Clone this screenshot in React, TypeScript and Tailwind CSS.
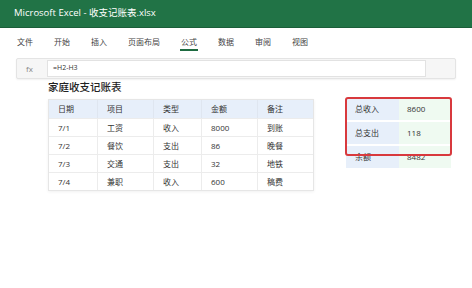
// Excel-like ledger window
const TABS = ['文件', '开始', '插入', '页面布局', '公式', '数据', '审阅', '视图'];

const COLS = [
  { key: 'date', label: '日期', w: 'w-[49px]' },
  { key: 'item', label: '项目', w: 'w-[56px]' },
  { key: 'type', label: '类型', w: 'w-[48px]' },
  { key: 'amount', label: '金额', w: 'w-[56px]' },
  { key: 'note', label: '备注', w: 'w-[55px]' },
] as const;

const ROWS = [
  { date: '7/1', item: '工资', type: '收入', amount: '8000', note: '到账' },
  { date: '7/2', item: '餐饮', type: '支出', amount: '86', note: '晚餐' },
  { date: '7/3', item: '交通', type: '支出', amount: '32', note: '地铁' },
  { date: '7/4', item: '兼职', type: '收入', amount: '600', note: '稿费' },
];

const SUMMARY = [
  { label: '总收入', value: '8600' },
  { label: '总支出', value: '118' },
  { label: '余额', value: '8482' },
];

export default function App() {
  return (
    <div
      className="w-[472px] h-[288px] bg-white overflow-hidden text-[#333]"
      style={{ fontFamily: '"Open Sans", "Noto Sans CJK SC", sans-serif' }}
    >
      {/* Title bar */}
      <div className="h-[28px] bg-[#217346] border-b border-[#1b5e39] flex items-center pl-[14px] text-white text-[9.5px]">
        Microsoft Excel - 收支记账表.xlsx
      </div>

      {/* Ribbon tabs */}
      <div className="h-[30px] flex gap-[21px] pl-[17px] pt-[8px]">
        {TABS.map((t) => (
          <div key={t} className="flex flex-col items-stretch">
            <span className="text-[8px] leading-[11px] text-[#444]">{t}</span>
            {t === '公式' && <span className="mt-[2px] h-[2px] bg-[#1e6b41] -mx-[1px]" />}
          </div>
        ))}
      </div>

      {/* Formula bar */}
      <div className="mx-[16px] h-[21px] flex items-center bg-[#f6f6f6] border border-[#e4e4e4] rounded-[2px] shadow-[0_1px_2px_rgba(0,0,0,0.06)]">
        <span className="w-[30px] pl-[9px] text-[8px] text-[#888]">fx</span>
        <div className="flex-1 h-[17px] bg-white border border-[#e2e2e2] flex items-center pl-[5px] text-[7px] text-[#333]">
          =H2-H3
        </div>
        <div className="w-[29px]" />
      </div>

      {/* Sheet title */}
      <div className="pl-[48px] mt-[1px] text-[10.5px] leading-[15px] font-medium text-[#222]">家庭收支记账表</div>

      <div className="flex items-start pl-[48px]">
        {/* Ledger table */}
        <div className="mt-[4px] border border-[#e6e6e6] shadow-[0_1px_3px_rgba(0,0,0,0.06)] text-[8px]">
          <div className="flex h-[18px] bg-[#e7effa]">
            {COLS.map((c) => (
              <div key={c.key} className={`${c.w} flex items-center pl-[9px] border-r border-[#dfe6f0] last:border-r-0`}>
                {c.label}
              </div>
            ))}
          </div>
          {ROWS.map((r) => (
            <div key={r.date} className="flex h-[18px] border-t border-[#ececec]">
              {COLS.map((c) => (
                <div key={c.key} className={`${c.w} flex items-center pl-[9px] border-r border-[#ececec] last:border-r-0`}>
                  {r[c.key]}
                </div>
              ))}
            </div>
          ))}
        </div>

        {/* Summary */}
        <div className="relative ml-[32px] mt-[3px] flex flex-col gap-[2px] text-[8px]">
          {SUMMARY.map((s) => (
            <div key={s.label} className="flex h-[22px]">
              <div className="w-[53px] bg-[#e7effa] flex items-center pl-[9px]">{s.label}</div>
              <div className="w-[52px] bg-[#effaf1] flex items-center pl-[8px]">{s.value}</div>
            </div>
          ))}
          <div className="absolute left-[-1px] top-[-1px] w-[107px] h-[59px] border-2 border-[#d8393d] rounded-[3px]" />
        </div>
      </div>
    </div>
  );
}
